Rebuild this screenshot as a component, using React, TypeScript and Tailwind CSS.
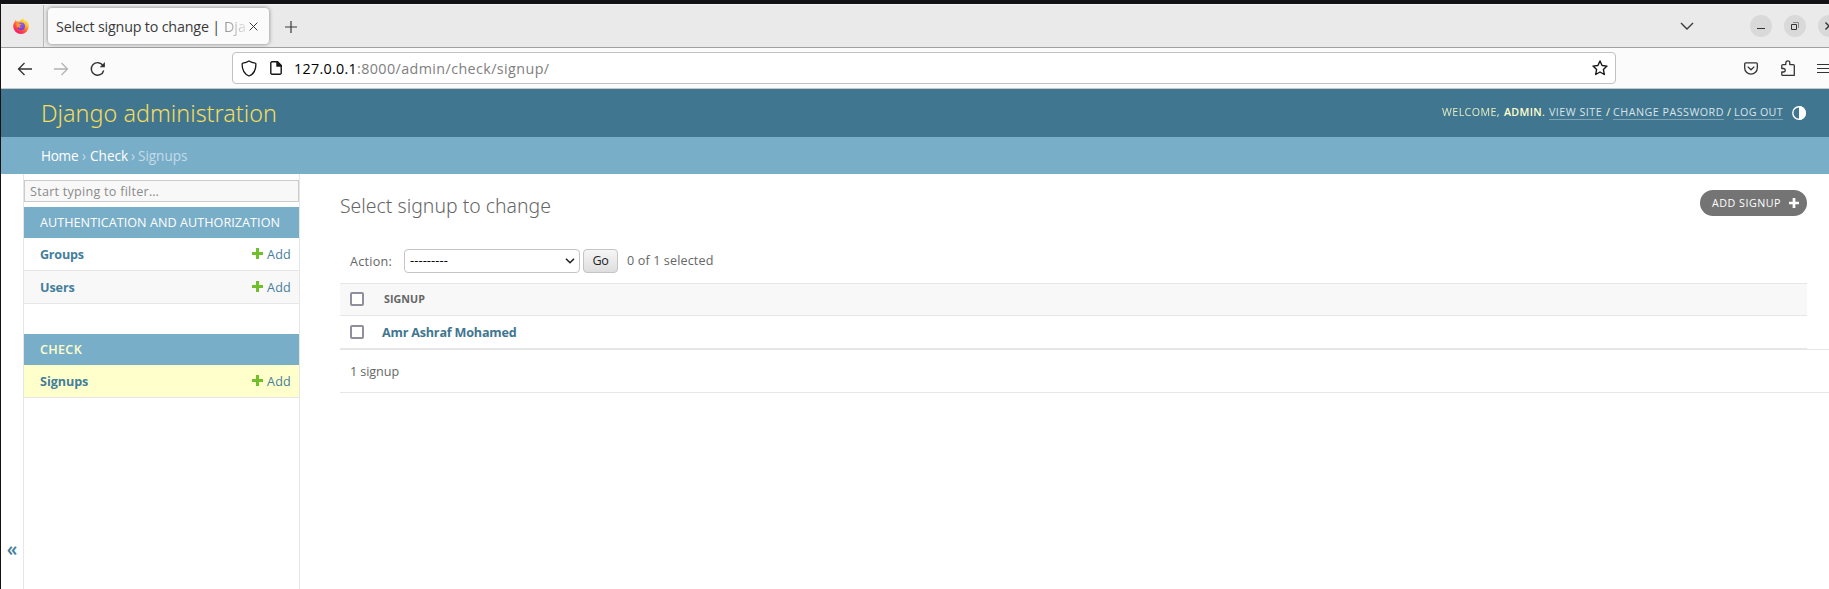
import React from "react";

function Firefox() {
  return (
    <svg viewBox="0 0 16 16" className="h-4 w-4">
      <defs>
        <linearGradient id="flame" x1="0.85" y1="0.05" x2="0.25" y2="0.95">
          <stop offset="0" stopColor="#fff44f" />
          <stop offset="0.35" stopColor="#ffb52e" />
          <stop offset="0.62" stopColor="#ff5a3c" />
          <stop offset="1" stopColor="#f5156c" />
        </linearGradient>
        <radialGradient id="globe" cx="0.6" cy="0.3" r="0.8">
          <stop offset="0" stopColor="#9059ff" />
          <stop offset="1" stopColor="#5b3fd6" />
        </radialGradient>
      </defs>
      <path
        fill="url(#flame)"
        d="M10.4.2c.2 1.5 1 2.2 2 3 .4-.2.6-.6.5-1.100 1.200.9 2.900 3.500 2.900 6.200A7.800 7.700 0 0 1 .2 8.300C.1 6.300.9 4.600 2 3.400l.3-1.500c.7.3 1.200.9 1.500 1.500.9-.3 1.900-.3 2.700.1C7.200 2.100 8.600 1 10.400.2z"
      />
      <circle cx="8.200" cy="8.200" r="3.700" fill="url(#globe)" />
      <path fill="#ff9a30" d="M3.600 5.600c1.300-.7 2.500-.5 3.300.2l1.600.2c0 1-1.600 1-1.700 1.700-.2.900.8 1.500 2 1.100-.7 1.200-2.500 1.500-3.800.3-.3-.3-.5.4-.2 1.200C3.500 9.200 3 7.200 3.600 5.600z" />
    </svg>
  );
}

function Plus({ className }: { className: string }) {
  return (
    <svg viewBox="0 0 11 11" className={className} fill="currentColor">
      <path d="M4 0h3v4h4v3H7v4H4V7H0V4h4z" />
    </svg>
  );
}

function TabBar() {
  return (
    <div className="flex h-[44px] shrink-0 border-t border-b border-t-[#f4f4f4] border-b-[#a0a0a0] bg-[#eaeaea] text-[#3a3a3c]">
      <div className="flex w-[43px] items-center border-r border-[#b9b9b9] pl-3">
        <Firefox />
      </div>
      <div className="mt-[3px] ml-1 flex h-9 w-[221px] items-center rounded-[4px] bg-[#fbfbfb] pl-2 text-[14.3px] shadow-[0_0_4px_rgba(0,0,0,0.45)]">
        <span className="w-[168px] pt-px whitespace-pre tracking-[-0.18px]">Select signup to change |</span>
        <span className="w-[22px] overflow-hidden bg-linear-to-r from-[#8f8f90] to-[#e3e3e3] bg-clip-text pt-px text-transparent">Dja</span>
        <svg viewBox="0 0 10 10" className="ml-[3px] h-[9px] w-[9px]" stroke="currentColor" strokeWidth="1.100">
          <path d="M.7.7l8.600 8.600M9.300.7L.7 9.300" />
        </svg>
      </div>
      <svg viewBox="0 0 12 12" className="mt-[16px] ml-[16px] h-3 w-3" stroke="currentColor" strokeWidth="1.200">
        <path d="M6 0v12M0 6h12" />
      </svg>
      <div className="ml-auto flex items-center pb-px">
        <svg viewBox="0 0 14 8" className="mr-[56px] h-2 w-[14px]" fill="none" stroke="currentColor" strokeWidth="1.400">
          <path d="M1 1l6 6 6-6" />
        </svg>
        <div className="mr-3 flex h-[22px] w-[22px] items-center justify-center rounded-full bg-[#d9d9d9]">
          <div className="mt-[5px] h-px w-2 bg-[#333]" />
        </div>
        <div className="mr-3 flex h-[22px] w-[22px] items-center justify-center rounded-full bg-[#d9d9d9]">
          <svg viewBox="0 0 8 8" className="h-2 w-2" fill="none">
            <path d="M.5 2.500h5v5h-5z" stroke="#333" />
            <path d="M2 .5h5.500V6" stroke="#888" />
          </svg>
        </div>
        <div className="-mr-[11px] flex h-[22px] w-[22px] items-center justify-center rounded-full bg-[#d9d9d9]">
          <svg viewBox="0 0 8 8" className="h-2 w-2" stroke="#333" strokeWidth="1.400">
            <path d="M.5.5l7 7M7.500.5l-7 7" />
          </svg>
        </div>
      </div>
    </div>
  );
}

function NavBar() {
  return (
    <div className="flex h-[41px] shrink-0 items-center border-b border-[#c9c9c9] bg-[#fbfbfb] text-[#333]">
      <svg viewBox="0 0 16 14" className="mt-px ml-4 h-[14px] w-4" fill="none" stroke="currentColor" strokeWidth="1.300">
        <path d="M15 7H2M7.500 1L1.500 7l6 6" />
      </svg>
      <svg viewBox="0 0 16 14" className="mt-px ml-5 h-[14px] w-4 text-[#b3b3b3]" fill="none" stroke="currentColor" strokeWidth="1.300">
        <path d="M1 7h13M8.500 1l6 6-6 6" />
      </svg>
      <svg viewBox="0 0 16 16" className="mt-px ml-[21px] h-4 w-4" fill="none" stroke="currentColor" strokeWidth="1.400">
        <path d="M13.700 9.500A6.300 6.300 0 1 1 13 4.700" />
        <path d="M14.900 1v5.200H9.700z" fill="currentColor" stroke="none" />
      </svg>
      <div className="ml-[126px] flex h-8 w-[1384px] shrink-0 items-center rounded-[4px] border border-[#c2c2c4] bg-white pl-2 text-[14.3px]">
        <svg viewBox="0 0 16 17" className="h-[17px] w-4 text-[#151515]" fill="none" stroke="currentColor" strokeWidth="1.300">
          <path d="M8 1c2 1.300 3.900 1.900 6.200 2.200.5 0 .7.400.7.900C14.900 9.800 12.500 14.300 8 16 3.500 14.300 1.100 9.800 1.100 4.100c0-.5.200-.9.700-.9C4.100 2.900 6 2.300 8 1z" />
        </svg>
        <svg viewBox="0 0 12 14" className="ml-[13px] h-[14px] w-3 text-[#151515]" fill="none" stroke="currentColor" strokeWidth="1.400">
          <path d="M7.500.8H2A1.200 1.200 0 0 0 .8 2v10A1.200 1.200 0 0 0 2 13.200h8a1.200 1.200 0 0 0 1.200-1.200V4.500z" />
          <path d="M7 .5V5h4.500z" fill="currentColor" />
        </svg>
        <span className="ml-[12px] w-[63px] pt-[2px] tracking-[0.3px] whitespace-nowrap text-black">127.0.0.1</span>
        <span className="pt-[2px] tracking-[0.41px] text-[#808080]">:8000/admin/check/signup/</span>
        <svg viewBox="0 0 16 16" className="mr-[7px] ml-auto h-4 w-4 text-[#151515]" fill="none" stroke="currentColor" strokeWidth="1.400" strokeLinejoin="round">
          <path d="M8 1l2.100 4.500 4.900.6-3.600 3.400.9 5L8 12l-4.300 2.500.9-5L1 6.100l4.900-.6z" />
        </svg>
      </div>
      <svg viewBox="0 0 14 13" className="ml-[128px] h-[13px] w-[14px] shrink-0" fill="none" stroke="currentColor" strokeWidth="1.300">
        <path d="M1.700.8h10.600c.6 0 1 .4 1 1V6a6.300 6.100 0 0 1-12.600 0V1.800c0-.6.400-1 1-1z" />
        <path d="M3.700 4.600L7 7.800l3.300-3.200" />
      </svg>
      <svg viewBox="0 0 14 16" className="ml-[23px] h-4 w-[14px] shrink-0" fill="none" stroke="currentColor" strokeWidth="1.300" strokeLinejoin="round">
        <path d="M4.800 4.600V2.900a2 2 0 0 1 4 0v1.700h3.500a1 1 0 0 1 1 1v9.700H1.700a.9.900 0 0 1-.9-.9V12h1.700a1.700 1.700 0 0 0 0-3.500H.8V5.600a1 1 0 0 1 1-1z" />
      </svg>
      <div className="ml-auto flex w-3 shrink-0 flex-col gap-[3px]">
        <div className="h-px bg-[#333]" />
        <div className="h-px bg-[#333]" />
        <div className="h-px bg-[#333]" />
      </div>
    </div>
  );
}

function Header() {
  return (
    <header className="flex h-12 shrink-0 items-center bg-[#417690] pl-[39px]">
      <h1 className="pl-px font-['Noto_Sans',sans-serif] text-[23.3px] leading-8 font-light tracking-[0.04px] text-[#f5dd5d]">
        Django administration
      </h1>
      <div className="mr-[23px] mb-[2px] ml-auto flex items-center text-[10.7px] leading-[14px] whitespace-nowrap text-[#ffffcc]">
        <span className="w-[62px] tracking-[0.41px] opacity-85">WELCOME,</span>
        <span className="w-[38px] font-semibold tracking-[0.3px]">ADMIN</span>
        <span className="w-[7px]">.</span>
        <a className="mt-px h-[15px] w-[54px] border-b border-[#7fa3b4] tracking-[0.5px] text-[#d9e4e9]">VIEW SITE</a>
        <span className="w-[10px] text-center">/</span>
        <a className="mt-px h-[15px] w-[111px] border-b border-[#7fa3b4] tracking-[0.51px] text-[#d9e4e9]">CHANGE PASSWORD</a>
        <span className="w-[10px] text-center">/</span>
        <a className="mt-px h-[15px] w-[49px] border-b border-[#7fa3b4] tracking-[0.37px] text-[#d9e4e9]">LOG OUT</a>
        <svg viewBox="0 0 14 14" className="mt-[2px] ml-[9px] h-[14px] w-[14px]">
          <circle cx="7" cy="7" r="6.200" fill="none" stroke="#fff" strokeWidth="1.400" />
          <path d="M7 0a7 7 0 0 1 0 14z" fill="#fff" />
        </svg>
      </div>
    </header>
  );
}

function Breadcrumbs() {
  return (
    <div className="flex h-[37px] shrink-0 items-center bg-[#79aec8] pt-px pl-10 text-[13.6px] whitespace-nowrap text-[#c4dce8]">
      <a className="w-[38px] tracking-[-0.3px] text-white">Home</a>
      <span className="w-[11px] pl-[3px]">›</span>
      <a className="w-[38px] text-white">Check</a>
      <span className="w-[10px] pl-[3px]">›</span>
      <span className="tracking-[-0.05px]">Signups</span>
    </div>
  );
}

function ModelRow({ name, className }: { name: string; className: string }) {
  return (
    <div className={"flex h-[33px] items-center border-b border-[#e6e6e6] pr-2 pl-4 text-[#447e9b] " + className}>
      <a className="pt-[2px] font-bold">{name}</a>
      <Plus className="mb-px ml-auto h-[11px] w-[11px] text-[#70bf2b]" />
      <a className="ml-1 w-6 pt-[2px] tracking-[0.21px]">Add</a>
    </div>
  );
}

function Sidebar() {
  return (
    <nav className="flex w-[277px] shrink-0 flex-col border-x border-[#e6e6e6] pt-[6px] text-[12.6px]">
      <div className="mb-[5px] flex h-[22px] shrink-0 items-center border border-[#ccc] bg-[#f8f8f8] pt-[2px] pl-[5px] tracking-[0.25px] text-[#8b8b8b]">
        Start typing to filter…
      </div>
      <div className="flex h-[31px] shrink-0 items-center bg-[#79aec8] pt-[2px] pl-4 tracking-[0.05px] whitespace-nowrap text-white">
        AUTHENTICATION AND AUTHORIZATION
      </div>
      <ModelRow name="Groups" className="tracking-[-0.25px]" />
      <ModelRow name="Users" className="bg-[#f8f8f8] tracking-[-0.1px]" />
      <div className="mt-[30px] flex h-[31px] shrink-0 items-center bg-[#79aec8] pt-[2px] pl-4 font-semibold tracking-[0.3px] text-[#ffffcc]">
        CHECK
      </div>
      <ModelRow name="Signups" className="bg-[#ffffcc] tracking-[-0.05px]" />
    </nav>
  );
}

function Checkbox() {
  return <div className="mb-px h-[14px] w-[14px] rounded-[2px] border-2 border-[#8f8f9d] bg-white" />;
}

function ChangeList() {
  return (
    <main className="flex min-w-0 grow flex-col pl-10 text-[12.6px] text-[#666]">
      <div className="flex h-[75px] items-start justify-between pt-4 pr-[22px]">
        <h2 className="font-['Noto_Sans',sans-serif] text-[19.4px] leading-8 font-light tracking-[0.02px]">
          Select signup to change
        </h2>
        <a className="flex h-[26px] w-[107px] items-center rounded-full bg-[#747474] pl-3 text-[10.7px] whitespace-nowrap text-white">
          <span className="w-[77px] tracking-[0.51px]">ADD SIGNUP</span>
          <Plus className="h-[10px] w-[10px]" />
        </a>
      </div>
      <div className="flex h-[34px] items-start pl-[10px]">
        <span className="mt-px w-[54px] leading-6 tracking-[0.25px]">Action:</span>
        <div className="flex h-6 w-44 items-center justify-between rounded-[4px] border border-[#c4c4c4] bg-white pr-1 pl-[5px] text-[12.9px] text-black">
          <span className="tracking-[0.07px]">---------</span>
          <svg viewBox="0 0 10 6" className="h-[6px] w-[10px]" fill="none" stroke="#222" strokeWidth="1.600">
            <path d="M1 .7l4 4 4-4" />
          </svg>
        </div>
        <button className="ml-[3px] flex h-6 w-[35px] items-center justify-center rounded-[4px] border border-[#c4c4c4] bg-linear-to-b from-[#f6f6f6] to-[#dedede] pt-px tracking-[-0.3px] text-[#222]">
          Go
        </button>
        <span className="ml-[9px] leading-6 tracking-[0.12px]">0 of 1 selected</span>
      </div>
      <div className="mr-[22px] flex h-[33px] items-center border-y border-[#e6e6e6] bg-[#f8f8f8] pl-[10px]">
        <Checkbox />
        <span className="ml-5 text-[10.7px] font-bold tracking-[0.06px]">SIGNUP</span>
      </div>
      <div className="mr-[22px] flex h-[33px] items-center border-b border-[#e6e6e6] pl-[10px]">
        <Checkbox />
        <a className="ml-[18px] pt-[2px] font-bold tracking-[-0.2px] text-[#417690]">Amr Ashraf Mohamed</a>
      </div>
      <div className="flex h-[44px] items-center border-y border-[#e6e6e6] pt-[2px] pl-[10px] tracking-[-0.08px]">1 signup</div>
    </main>
  );
}

export default function App() {
  return (
    <div className="flex h-[589px] w-[1829px] flex-col overflow-hidden bg-white font-['Open_Sans','Noto_Sans',sans-serif]">
      <div className="h-1 shrink-0 bg-[#121113]" />
      <div className="flex min-h-0 grow flex-col border-l border-[#1b0f16]">
        <TabBar />
        <NavBar />
        <Header />
        <Breadcrumbs />
        <div className="flex min-h-0 grow">
          <div className="flex w-[22px] shrink-0 items-end justify-center pb-[28px] text-[19px] leading-6 font-semibold text-[#447e9b]">
            «
          </div>
          <Sidebar />
          <ChangeList />
        </div>
      </div>
    </div>
  );
}
